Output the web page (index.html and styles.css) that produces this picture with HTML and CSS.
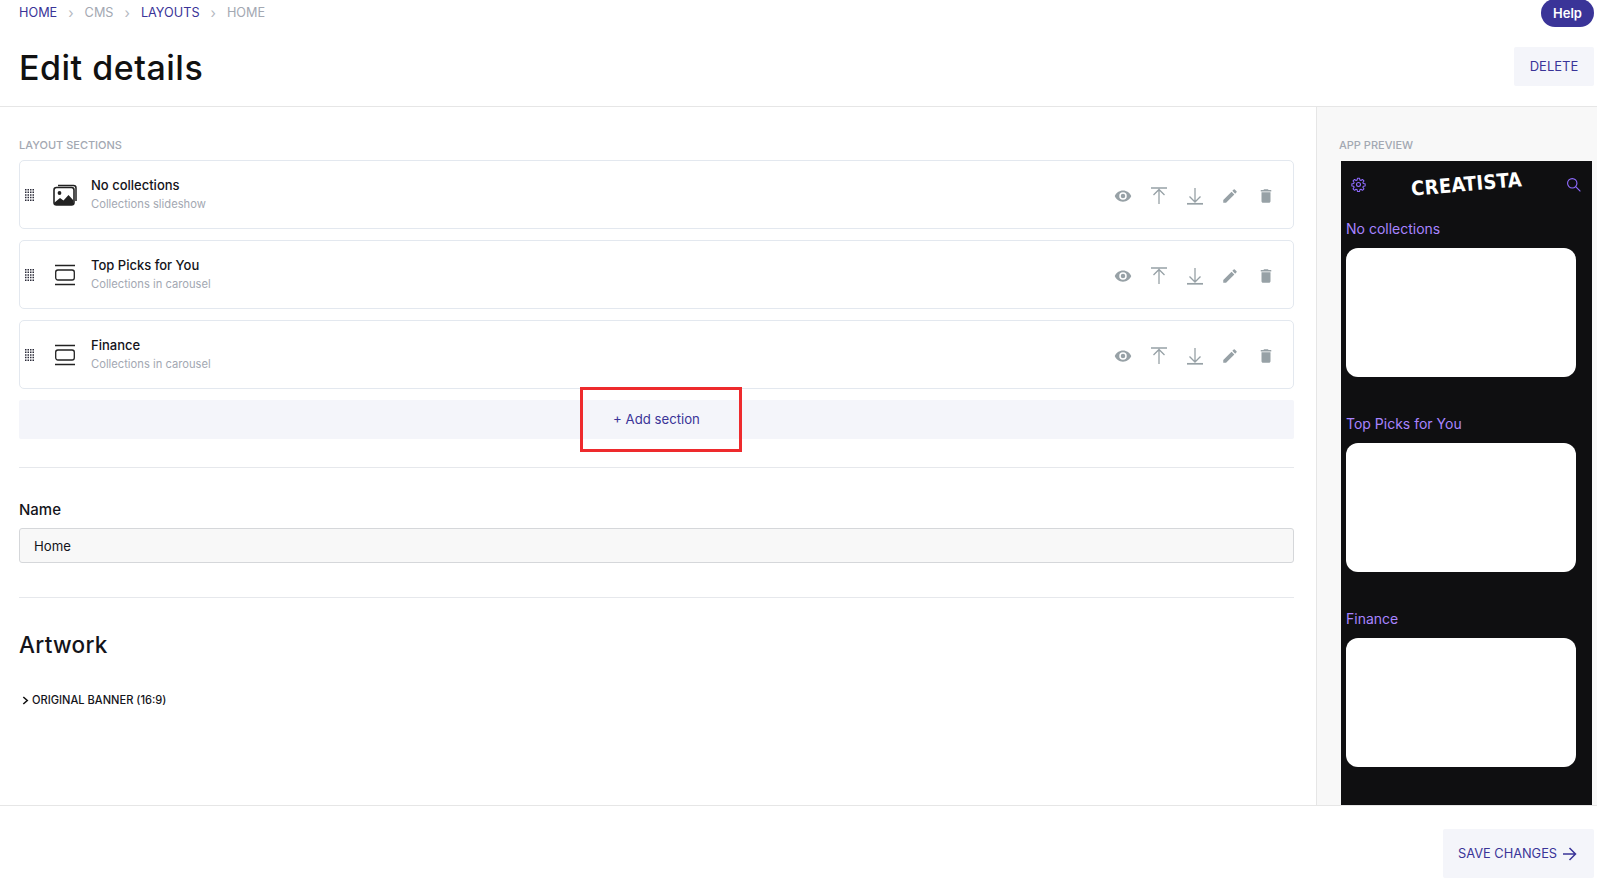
FILE: index.html
```html
<!DOCTYPE html>
<html lang="en">
<head>
    <meta charset="UTF-8">
    <title>Edit details</title>
    <link rel="stylesheet" href="styles.css">
</head>
<body>
    <svg class="svg-defs" width="0" height="0">
        <symbol id="i-drag" viewBox="0 0 9 12">
            <path d="M0 0h1.500v1.500H0zM2.500 0H4v1.500H2.500zM5 0h1.500v1.500H5zM7.500 0H9v1.500H7.500zM0 2.600h1.500v1.500H0zM2.500 2.600H4v1.500H2.500zM5 2.600h1.500v1.500H5zM7.500 2.600H9v1.500H7.500zM0 5.200h1.500v1.500H0zM2.500 5.200H4v1.500H2.500zM5 5.200h1.500v1.500H5zM7.500 5.200H9v1.500H7.500zM0 7.800h1.500v1.500H0zM2.500 7.800H4v1.500H2.500zM5 7.800h1.500v1.500H5zM7.500 7.800H9v1.500H7.500zM0 10.400h1.500v1.500H0zM2.500 10.400H4v1.500H2.500zM5 10.400h1.500v1.500H5zM7.500 10.400H9v1.500H7.500z"/>
        </symbol>
        <symbol id="i-carousel" viewBox="-2 -1 24 22">
            <path d="M0 .5h20M0 19.500h20" fill="none" stroke="currentColor" stroke-width="1.300"/>
            <rect x=".7" y="5" width="18.600" height="10" rx="2.200" fill="none" stroke="currentColor" stroke-width="1.300"/>
        </symbol>
        <symbol id="i-eye" viewBox="0 0 24 24">
            <path d="M12 4.500C7 4.500 2.700 7.600 1 12c1.700 4.400 6 7.500 11 7.500s9.300-3.100 11-7.500c-1.700-4.400-6-7.500-11-7.500zm0 12.500a5 5 0 1 1 0-10 5 5 0 0 1 0 10zm0-8a3 3 0 1 0 0 6 3 3 0 0 0 0-6z"/>
        </symbol>
        <symbol id="i-top" viewBox="0 0 18 18">
            <path d="M1 1h16M9 17V2.500M3.500 8 9 2.500 14.500 8" fill="none" stroke="currentColor" stroke-width="1.300"/>
        </symbol>
        <symbol id="i-bottom" viewBox="0 0 18 18">
            <path d="M1 16.800h16" fill="none" stroke="currentColor" stroke-width="1.700"/>
            <path d="M9 1v14M3.500 9.500 9 15l5.500-5.500" fill="none" stroke="currentColor" stroke-width="1.300"/>
        </symbol>
        <symbol id="i-pencil" viewBox="0 0 24 24">
            <path d="M3 17.250V21h3.750L17.810 9.940l-3.750-3.750L3 17.250zM20.710 7.040a1 1 0 0 0 0-1.410l-2.340-2.340a1 1 0 0 0-1.410 0l-1.830 1.830 3.750 3.750 1.830-1.830z"/>
        </symbol>
        <symbol id="i-trash" viewBox="0 0 24 24">
            <path d="M6 19c0 1.100.9 2 2 2h8c1.100 0 2-.9 2-2V7H6v12zM19 4h-3.500l-1-1h-5l-1 1H5v2h14V4z"/>
        </symbol>
    </svg>

    <div class="top-area">
        <nav class="breadcrumb">
            <a class="crumb-link">HOME</a><span class="crumb-sep">›</span>
            <a class="crumb-muted">CMS</a><span class="crumb-sep">›</span>
            <a class="crumb-link">LAYOUTS</a><span class="crumb-sep">›</span>
            <a class="crumb-muted">HOME</a>
        </nav>
        <button class="help-btn">Help</button>
        <div class="title-row">
            <h1>Edit details</h1>
            <button class="soft-btn delete-btn">DELETE</button>
        </div>
    </div>

    <div class="main-area">
        <div class="editor">
            <div class="small-label">LAYOUT SECTIONS</div>

            <div class="section-row">
                <svg class="drag"><use href="#i-drag"/></svg>
                <svg class="type-icon" viewBox="0 0 24 22">
                    <path d="M5 1.500h15.500a2.500 2.500 0 0 1 2.500 2.500v13" fill="none" stroke="#222" stroke-width="1.500"/>
                    <rect x="1" y="3.500" width="20" height="17.500" rx="2.500" fill="#fff" stroke="#222" stroke-width="1.600"/>
                    <circle cx="6.500" cy="9" r="1.900" fill="#222"/>
                    <path d="M1.500 18.500l5.500-4.500 3.500 2.500 5-5.500 5 5.500V21H1.500z" fill="#222"/>
                </svg>
                <div class="section-text">
                    <div class="section-name">No collections</div>
                    <div class="section-type">Collections slideshow</div>
                </div>
                <div class="row-actions">
                    <svg class="act eye"><use href="#i-eye"/></svg>
                    <svg class="act"><use href="#i-top"/></svg>
                    <svg class="act"><use href="#i-bottom"/></svg>
                    <svg class="act"><use href="#i-pencil"/></svg>
                    <svg class="act"><use href="#i-trash"/></svg>
                </div>
            </div>

            <div class="section-row">
                <svg class="drag"><use href="#i-drag"/></svg>
                <svg class="type-icon"><use href="#i-carousel"/></svg>
                <div class="section-text">
                    <div class="section-name">Top Picks for You</div>
                    <div class="section-type">Collections in carousel</div>
                </div>
                <div class="row-actions">
                    <svg class="act eye"><use href="#i-eye"/></svg>
                    <svg class="act"><use href="#i-top"/></svg>
                    <svg class="act"><use href="#i-bottom"/></svg>
                    <svg class="act"><use href="#i-pencil"/></svg>
                    <svg class="act"><use href="#i-trash"/></svg>
                </div>
            </div>

            <div class="section-row">
                <svg class="drag"><use href="#i-drag"/></svg>
                <svg class="type-icon"><use href="#i-carousel"/></svg>
                <div class="section-text">
                    <div class="section-name">Finance</div>
                    <div class="section-type">Collections in carousel</div>
                </div>
                <div class="row-actions">
                    <svg class="act eye"><use href="#i-eye"/></svg>
                    <svg class="act"><use href="#i-top"/></svg>
                    <svg class="act"><use href="#i-bottom"/></svg>
                    <svg class="act"><use href="#i-pencil"/></svg>
                    <svg class="act"><use href="#i-trash"/></svg>
                </div>
            </div>

            <div class="add-row">
                + Add section
                <span class="red-box"></span>
            </div>

            <hr class="rule rule-add">

            <label class="field-label" for="name-input">Name</label>
            <input class="field-input" id="name-input" type="text" value="Home">

            <hr class="rule rule-name">

            <h2>Artwork</h2>
            <div class="art-item">
                <svg class="chevron" viewBox="0 0 8 10"><path d="M1.500 1 6 5l-4.500 4" fill="none" stroke="#111" stroke-width="1.800"/></svg>
                ORIGINAL BANNER (16:9)
            </div>
        </div>

        <aside class="preview-pane">
            <div class="small-label">APP PREVIEW</div>
            <div class="phone">
                <div class="phone-head">
                    <svg class="phone-icon" viewBox="0 0 24 24" fill="none" stroke="#8f6bff" stroke-width="1.700" stroke-linejoin="round">
                        <circle cx="12" cy="12" r="3.200"/>
                        <path d="M10.300 2h3.400l.5 2.900 1.700.7 2.400-1.700 2.400 2.400-1.700 2.400.7 1.700 2.900.5v3.400l-2.900.5-.7 1.700 1.700 2.400-2.400 2.400-2.400-1.700-1.700.7-.5 2.900h-3.400l-.5-2.900-1.700-.7-2.400 1.700-2.400-2.400 1.700-2.400-.7-1.700-2.900-.5v-3.400l2.900-.5.7-1.700-1.700-2.400 2.400-2.400 2.400 1.700 1.700-.7z"/>
                    </svg>
                    <div class="phone-logo">CREATISTA</div>
                    <svg class="phone-icon" viewBox="0 0 24 24" fill="none" stroke="#8f6bff" stroke-width="1.800">
                        <circle cx="10" cy="10" r="7.500"/>
                        <path d="M15.500 15.500 23 23"/>
                    </svg>
                </div>
                <div class="phone-title">No collections</div>
                <div class="phone-card"></div>
                <div class="phone-title">Top Picks for You</div>
                <div class="phone-card"></div>
                <div class="phone-title">Finance</div>
                <div class="phone-card"></div>
            </div>
        </aside>
    </div>

    <div class="footer-area">
        <button class="soft-btn save-btn">
            SAVE CHANGES
            <svg class="arrow" viewBox="0 0 14 14"><path d="M0 7h12.500M6.500 1l6 6-6 6" fill="none" stroke="#3a3498" stroke-width="1.500"/></svg>
        </button>
    </div>
</body>
</html>
```

FILE: styles.css
```css
* { box-sizing: border-box; }
html, body { height: 100%; }
body { margin: 0; height: 882px; overflow: hidden; display: flex; flex-direction: column; font-family: Inter, "Liberation Sans", sans-serif; color: #14141a; background: #fff; }
button { font-family: inherit; border: none; cursor: pointer; }
.svg-defs { position: absolute; }

/* top */
.top-area { height: 107px; flex: none; position: relative; padding: 0 3px 0 19px; border-bottom: 1px solid #e6e6e6; }
.breadcrumb { display: flex; align-items: center; height: 24px; font-size: 12.700px; }
.crumb-link { color: #3a3498; }
.crumb-muted { color: #a3a8b2; }
.crumb-sep { color: #b4b8c0; margin: 0 11px; font-size: 14px; }
.help-btn { position: absolute; top: -1px; right: 3px; width: 53px; height: 28px; border-radius: 14px; background: #3a3498; color: #fff; font-size: 13px; font-weight: 600; }
.title-row { display: flex; justify-content: space-between; align-items: center; margin-top: 23px; }
h1 { margin: 0 0 3px; font-size: 34px; font-weight: 500; line-height: 42px; color: #111; letter-spacing: .5px; }
.soft-btn { background: #f4f5fa; color: #3a3498; border-radius: 2px; font-size: 13px; }
.delete-btn { width: 80px; height: 39px; margin-bottom: 6px; padding-bottom: 3px; }

/* main */
.main-area { flex: 1; display: flex; min-height: 0; }
.editor { width: 1317px; flex: none; padding: 31px 22px 0 19px; border-right: 1px solid #e6e6e6; }
.small-label { font-size: 11px; line-height: 14px; color: #a3a8b2; font-weight: 500; margin-bottom: 8px; }
.section-row { display: flex; align-items: center; height: 69px; margin-bottom: 11px; border: 1px solid #e3e8ef; border-radius: 5px; padding-left: 5px; }
.drag { width: 9px; height: 12px; fill: #2c2c3a; flex: none; margin-right: 19px; }
.type-icon { width: 24px; height: 22px; flex: none; margin-right: 14px; color: #222; }
.section-text { flex: 1; padding-bottom: 2px; }
.section-name { font-size: 13px; line-height: 18px; color: #14141a; margin-bottom: 2px; font-weight: 450; }
.section-type { font-size: 11.200px; line-height: 16px; color: #a3a8b2; }
.row-actions { display: flex; align-items: center; gap: 17.750px; margin-right: 18px; margin-top: 2px; }
.act { width: 18px; height: 18px; fill: #97a1a6; color: #97a1a6; flex: none; }
.add-row { position: relative; height: 39px; padding: 0 0 2px 0; background: #f4f5fa; color: #3a3498; font-size: 13.200px; display: flex; align-items: center; justify-content: center; border-radius: 2px; }
.red-box { position: absolute; left: 561px; top: -13px; width: 162px; height: 65px; border: 3px solid #ee2a2d; }
.rule { border: none; border-top: 1px solid #e6e8ec; margin: 0; }
.rule-add { margin-top: 28px; }
.field-label { display: block; font-size: 15px; font-weight: 500; line-height: 20px; margin-top: 32px; color: #14141a; }
.field-input { display: block; width: 100%; height: 35px; margin-top: 8px; padding: 0 14px; font-family: inherit; font-size: 13.200px; color: #14141a; background: #f8f8f8; border: 1px solid #d5d7da; border-radius: 3px; }
.rule-name { margin-top: 34px; }
h2 { margin: 32px 0 0; font-size: 22.500px; font-weight: 500; line-height: 30px; color: #14141a; letter-spacing: .3px; }
.art-item { display: flex; align-items: center; margin-top: 32px; font-size: 11.100px; line-height: 16px; color: #14141a; font-weight: 500; padding-left: 3px; }
.chevron { width: 7px; height: 9px; margin-right: 3px; flex: none; }

/* preview */
.preview-pane { flex: 1; background: #f8f8f8; padding: 31px 5px 0 22px; overflow: hidden; min-width: 0; }
.preview-pane .small-label { margin-bottom: 9px; }
.phone { height: 700px; margin: 0 0 0 2px; padding: 0 16px 0 5px; background: #0f0f11; }
.phone-head { display: flex; align-items: center; justify-content: space-between; height: 46px; padding: 0 0 0 5px; margin-right: -5px; }
.phone-icon { width: 15px; height: 15px; flex: none; }
.phone-logo { font-family: "DejaVu Sans", sans-serif; font-weight: 700; font-stretch: condensed; font-size: 20px; color: #fff; transform: rotate(-5deg); letter-spacing: .3px; margin-left: 2px; }
.phone-title { font-size: 14px; line-height: 18px; height: 18px; margin-top: 13px; color: #a884ff; }
.phone-card { height: 129px; margin-top: 10px; margin-bottom: 38px; background: #fff; border-radius: 12px; }

/* footer */
.footer-area { height: 77px; flex: none; border-top: 1px solid #e6e6e6; display: flex; justify-content: flex-end; align-items: flex-start; padding: 23px 3px 0 0; background: #fff; position: relative; z-index: 1; }
.save-btn { display: flex; align-items: center; gap: 6px; width: 151px; height: 49px; padding-left: 15px; font-size: 12.800px; }
.arrow { width: 14px; height: 14px; }
```
